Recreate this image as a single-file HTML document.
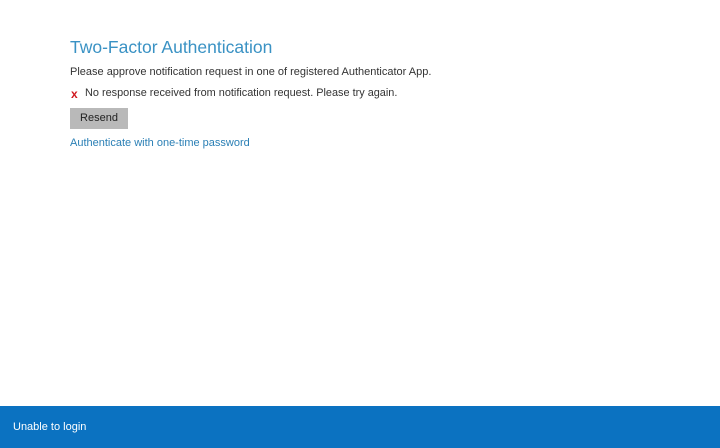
<!DOCTYPE html>
<html><head><style>
body{margin:0;width:720px;height:448px;background:#fff;font-family:"Liberation Sans",sans-serif;position:relative;overflow:hidden}
.t{position:absolute;left:70px;top:37px;font-size:17.5px;color:#3a92c4;white-space:nowrap}
.p{position:absolute;left:70px;top:66px;font-size:11px;color:#333;white-space:nowrap}
.e{position:absolute;left:85px;top:87px;font-size:10.9px;color:#333;white-space:nowrap}
.x{position:absolute;left:71px;top:87px;font-size:12px;color:#d0181e;font-weight:bold}
.b{position:absolute;left:70px;top:108px;width:58px;height:21px;background:#b9b9b9;font-size:11px;color:#222;text-align:center;line-height:21px}
.a{position:absolute;left:70px;top:137px;font-size:11px;color:#2a7fb5;white-space:nowrap}
.f{position:absolute;left:0;top:406px;width:720px;height:42px;background:#0b72c1}
.f span{position:absolute;left:13px;top:15px;font-size:11px;color:#fff}
</style></head><body>
<div class="t">Two-Factor Authentication</div>
<div class="p">Please approve notification request in one of registered Authenticator App.</div>
<div class="x">x</div>
<div class="e">No response received from notification request. Please try again.</div>
<div class="b">Resend</div>
<div class="a">Authenticate with one-time password</div>
<div class="f"><span>Unable to login</span></div>
</body></html>
